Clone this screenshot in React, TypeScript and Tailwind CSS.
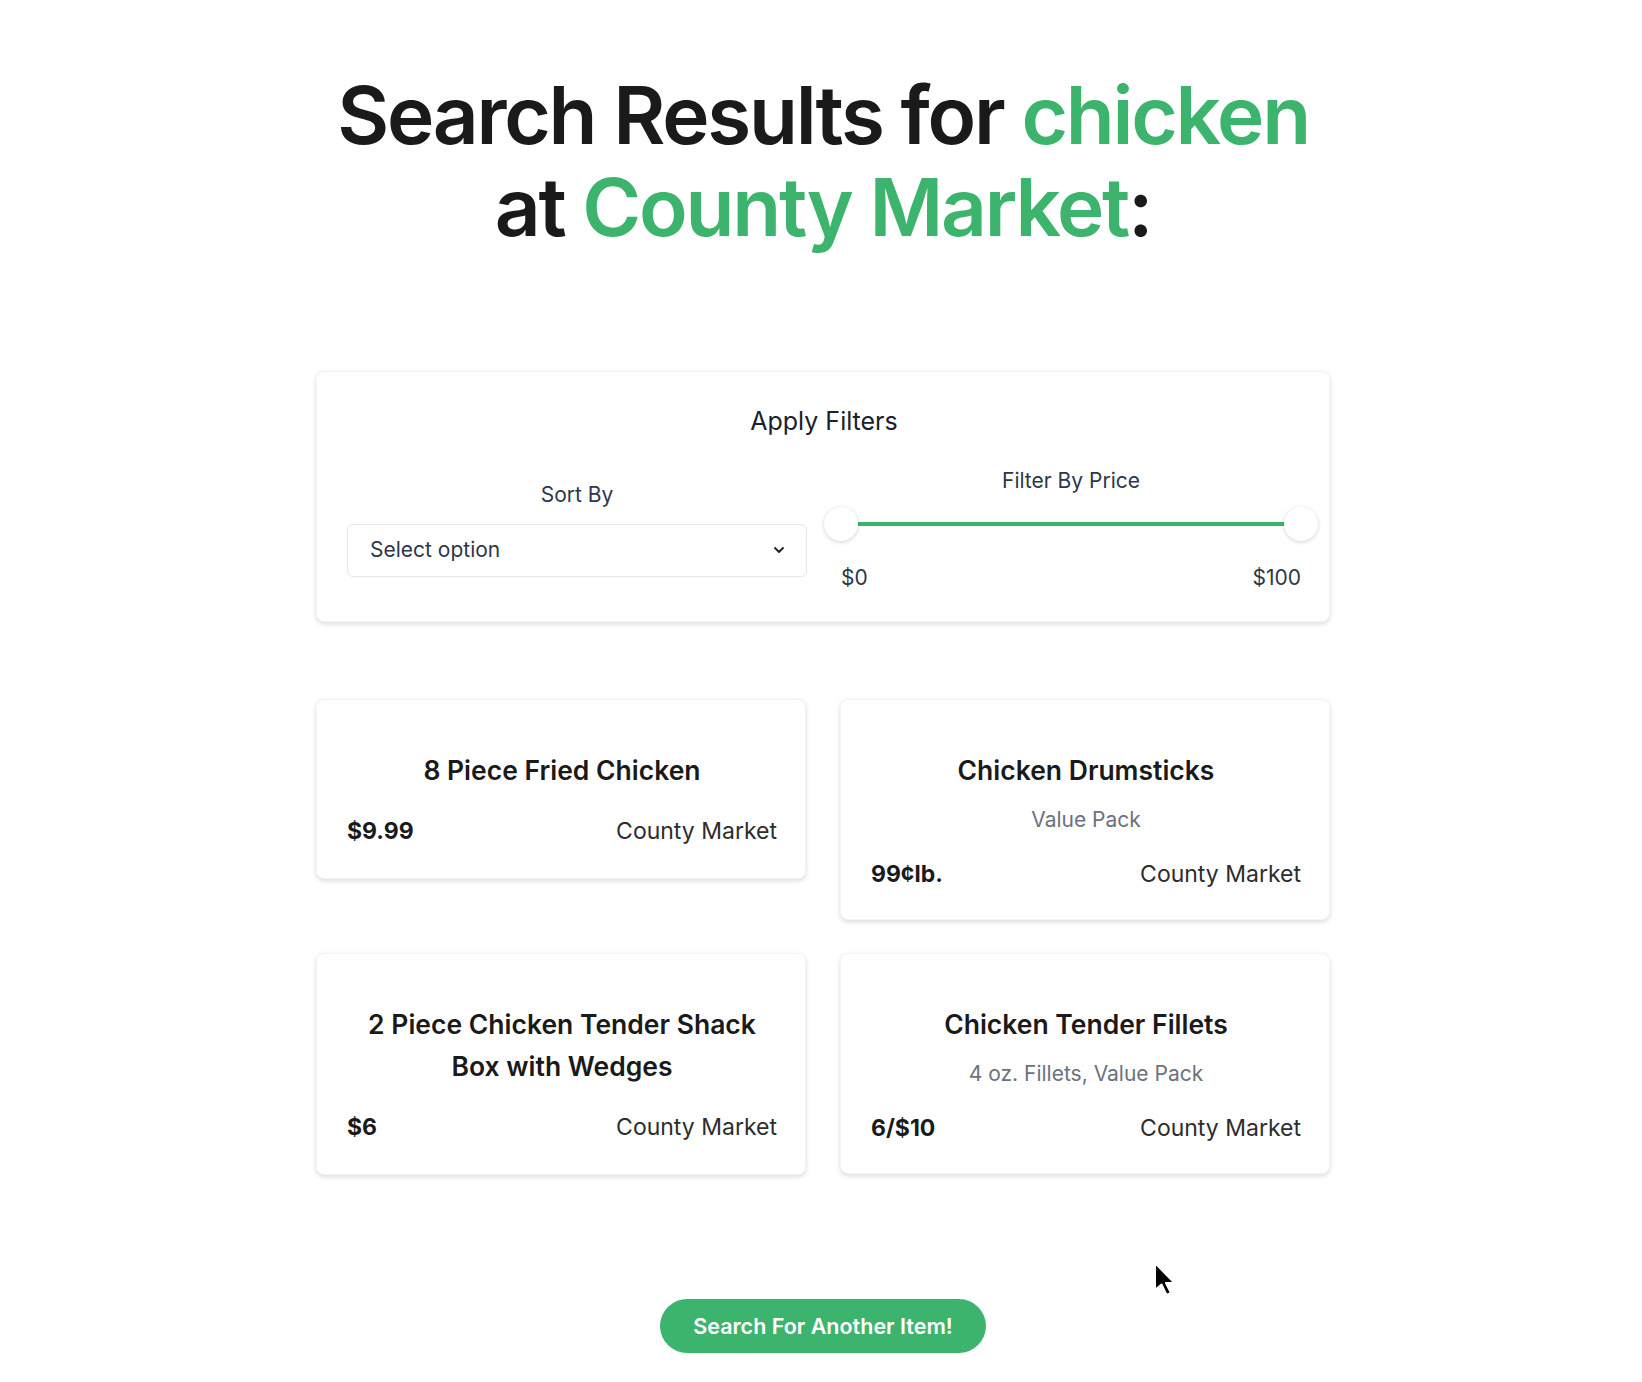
import { ChevronDown } from 'lucide-react'

type Item = {
  name: string
  detail?: string
  price: string
  store: string
}

const ITEMS: Item[] = [
  { name: '8 Piece Fried Chicken', price: '$9.99', store: 'County Market' },
  { name: 'Chicken Drumsticks', detail: 'Value Pack', price: '99¢lb.', store: 'County Market' },
  { name: '2 Piece Chicken Tender Shack Box with Wedges', price: '$6', store: 'County Market' },
  { name: 'Chicken Tender Fillets', detail: '4 oz. Fillets, Value Pack', price: '6/$10', store: 'County Market' },
]

function ItemCard({ item }: { item: Item }): React.ReactElement {
  return (
    <div
      className={
        item.detail
          ? 'rounded-lg border border-gray-100 bg-white pt-[49px] pb-[31px] pl-[30px] pr-[28px] shadow-[0_2px_5px_rgba(0,0,0,0.14)]'
          : 'rounded-lg border border-gray-100 bg-white pt-[49px] pb-[33px] pl-[30px] pr-[28px] shadow-[0_2px_5px_rgba(0,0,0,0.14)]'
      }
    >
      <h3 className="px-2 text-center text-[26.5px] leading-[42px] font-semibold text-[#1a1a1a]">{item.name}</h3>
      {item.detail && (
        <p className="mt-[15px] mb-[4px] text-center text-[21px] leading-7 text-[#6b7280]">{item.detail}</p>
      )}
      <div className="mt-[26px] flex items-center justify-between text-[23px] leading-7">
        <span className="font-bold text-[#1a1a1a]">{item.price}</span>
        <span className="text-[#2d2d2d]">{item.store}</span>
      </div>
    </div>
  )
}

function PriceSlider(): React.ReactElement {
  return (
    <div className="flex flex-col">
      <p className="text-center text-[21px] leading-7 text-[#2d3748]">Filter By Price</p>
      <div className="relative mt-[12px] h-[34px]">
        <div className="absolute left-0 right-0 top-[15px] h-1 rounded-full bg-[#3db46d]" />
        <div className="absolute left-[-17px] top-0 h-[34px] w-[34px] rounded-full bg-white shadow-[0_1px_4px_rgba(0,0,0,0.18)]" />
        <div className="absolute right-[-17px] top-0 h-[34px] w-[34px] rounded-full bg-white shadow-[0_1px_4px_rgba(0,0,0,0.18)]" />
      </div>
      <div className="mt-[25px] flex justify-between text-[21px] leading-6 text-[#2d3748]">
        <span>$0</span>
        <span>$100</span>
      </div>
    </div>
  )
}

export default function App(): React.ReactElement {
  return (
    <div className="relative flex min-h-screen flex-col items-center bg-white pt-[69px] pb-[27px] pl-[4px] font-['Inter',sans-serif]">
      <h1 className="text-center text-[80px] leading-[92px] font-semibold tracking-[-0.028em] text-[#1a1a1a]">
        Search Results for <span className="text-[#3db46d]">chicken</span>
        <br />
        at <span className="text-[#3db46d]">County Market</span>:
      </h1>

      <div className="mt-[118px] w-[1014px] rounded-lg border border-gray-100 bg-white pt-[33px] pb-[31px] pl-[30px] pr-[28px] shadow-[0_2px_5px_rgba(0,0,0,0.14)]">
        <h2 className="text-center text-[25px] leading-8 text-[#1a202c]">Apply Filters</h2>
        <div className="mt-[30px] grid grid-cols-2 items-center gap-x-[34px]">
          <div className="flex flex-col">
            <p className="text-center text-[21px] leading-7 text-[#2d3748]">Sort By</p>
            <div className="mt-[15px] flex h-[53px] items-center justify-between rounded-md border border-gray-200 pl-[22px] pr-[19px] text-[21px] text-[#2d3748]">
              <span>Select option</span>
              <ChevronDown size={16} strokeWidth={2.75} className="text-[#1a202c]" />
            </div>
          </div>
          <PriceSlider />
        </div>
      </div>

      <div className="mt-[77px] grid w-[1014px] grid-cols-2 items-start gap-x-[34px] gap-y-[33px]">
        {ITEMS.map((item) => (
          <ItemCard key={item.name} item={item} />
        ))}
      </div>

      <button className="mt-[124px] h-[54px] rounded-full bg-[#3db46d] px-[33px] text-[21.5px] font-semibold text-white">
        Search For Another Item!
      </button>

      <svg
        className="absolute left-[1152px] top-[1260px]"
        width="28"
        height="40"
        viewBox="0 0 28 40"
      >
        <path
          d="M3 3 L3 30 L9.5 24.5 L14.5 35 L19 33 L14 23 L22.5 23 Z"
          fill="#000"
          stroke="#fff"
          strokeWidth="2"
          strokeLinejoin="round"
        />
      </svg>
    </div>
  )
}
